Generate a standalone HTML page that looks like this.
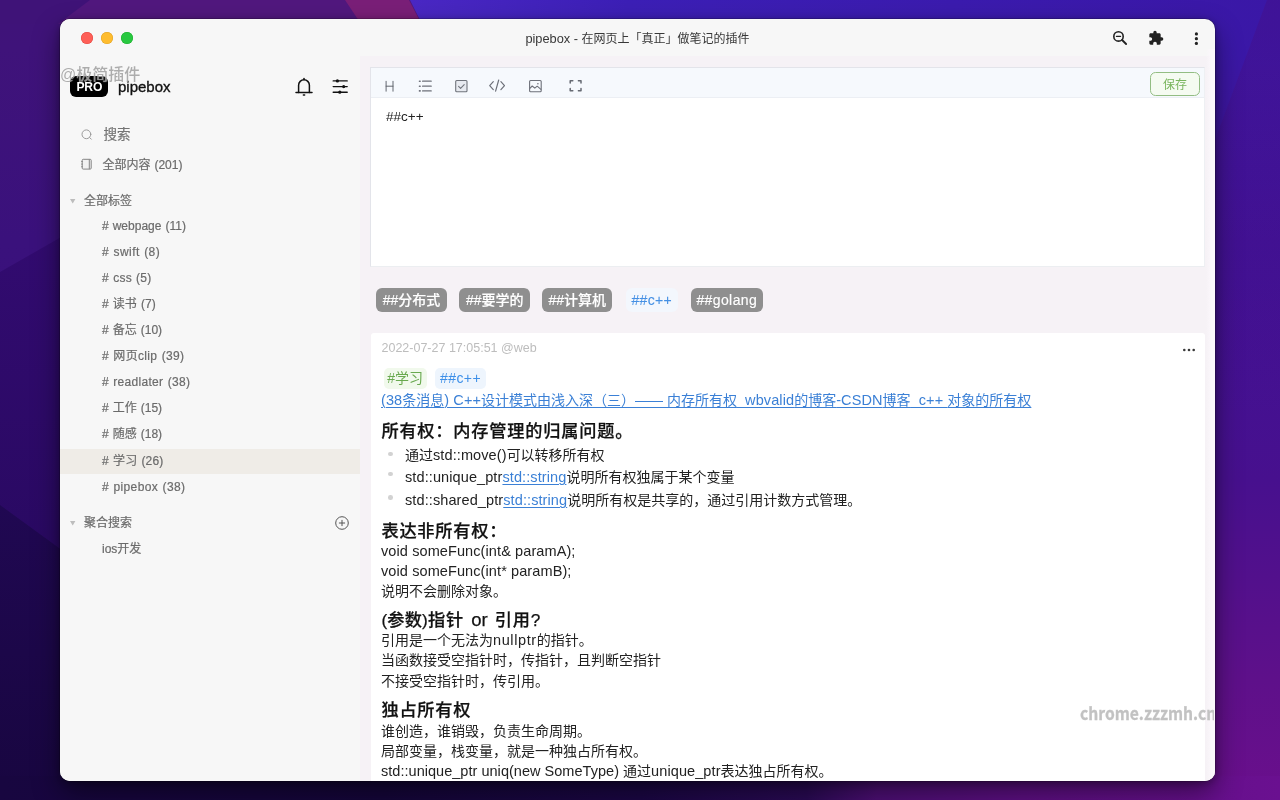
<!DOCTYPE html>
<html lang="zh-CN">
<head>
<meta charset="utf-8">
<title>pipebox - 在网页上「真正」做笔记的插件</title>
<style>
*{box-sizing:border-box;margin:0;padding:0}
html,body{width:1280px;height:800px;overflow:hidden}
body{position:relative;background:#3a128a;font-family:"Liberation Sans","Noto Sans CJK SC",sans-serif;-webkit-font-smoothing:antialiased}
#wall{position:absolute;left:0;top:0;width:1280px;height:800px}
.win{will-change:transform;position:absolute;left:60px;top:19px;width:1155px;height:762px;border-radius:10px;background:#f7f7f7;overflow:hidden;box-shadow:0 0 0 .5px rgba(0,0,0,.35),0 12px 28px rgba(0,0,0,.45),0 2px 8px rgba(0,0,0,.3)}
.abs{position:absolute}
/* title bar */
.tl{z-index:3;position:absolute;top:13px;width:12px;height:12px;border-radius:50%}
.title{z-index:3;position:absolute;left:0;right:0;top:9.6px;height:20px;line-height:20px;text-align:center;font-size:12px;color:#383838;letter-spacing:0}
/* sidebar */
.side{position:absolute;left:0;top:0;width:300px;bottom:0;background:#f7f7f7}
.main{position:absolute;left:300px;top:37px;right:0;bottom:0;background:#f6f2f6}
.pro{position:absolute;left:10px;top:57px;width:38px;height:21px;border-radius:6px;background:#000;color:#fff;font-weight:bold;font-size:13.5px;line-height:21px;text-align:center;letter-spacing:-.2px}
.brand{position:absolute;left:58px;top:58px;font-size:15px;line-height:20px;color:#111;-webkit-text-stroke:.35px #111}
.srow{position:absolute;left:0;width:300px;height:26px;line-height:26px;font-size:12px;color:#6b6b6b;white-space:nowrap;-webkit-text-stroke:.2px #6b6b6b}
.srow span{position:absolute;top:0;word-spacing:.7px}
/* main */
.editor{position:absolute;left:310px;top:48.4px;width:835px;height:199.6px;background:#fff;border:1px solid #e3e4ea;border-right-color:#eef0f3;border-bottom-color:#eceef1}
.tbar{position:absolute;left:0;top:0;right:0;height:30px;background:#f6f9fd;border-bottom:1px solid #eceff4}
.save{position:absolute;left:1090px;top:53px;width:50px;height:24px;border:1px solid #93bd83;border-radius:5.5px;background:#f5fbf1;color:#78b55c;font-size:12px;line-height:24.6px;text-align:center}
.etext{position:absolute;left:326px;top:89px;font-size:13.5px;line-height:18px;color:#222}
.tag{position:absolute;top:269.3px;height:23.4px;border-radius:6px;background:#8f8f8f;color:#fff;font-size:14px;line-height:24.4px;text-align:center;font-weight:500;white-space:nowrap;-webkit-text-stroke:.15px #fff}
.card{position:absolute;left:311px;top:314px;width:834px;height:460px;background:#fff;border-radius:3px 3px 0 0}
.date{position:absolute;left:10.5px;top:7px;font-size:12.5px;line-height:16px;color:#bdbdbd;white-space:nowrap}
.ln{position:absolute;left:10px;font-size:14px;line-height:20px;color:#222;white-space:nowrap}
.hd{position:absolute;left:10.4px;font-size:17.2px;letter-spacing:.8px;line-height:24px;color:#111;font-weight:500;white-space:nowrap;-webkit-text-stroke:.25px #111}
a{color:#3b80d6;text-decoration:underline;text-underline-offset:2px;text-decoration-thickness:1px}
.ctag{position:absolute;top:34.5px;height:21.5px;border-radius:5px;font-size:14px;line-height:21.5px;text-align:center;white-space:nowrap}
.dot{position:absolute;left:17.3px;width:4.6px;height:4.6px;border-radius:50%;background:#d2d2d2}
.l{font-size:14.5px;letter-spacing:.1px}
.wm1{position:absolute;left:0px;top:45.6px;z-index:5;font-size:16px;line-height:20px;color:rgba(138,138,138,.7);font-weight:500;white-space:nowrap;text-shadow:0 0 1px rgba(255,255,255,.75)}
.wm2{position:absolute;left:1020.4px;top:681.5px;width:134px;z-index:5;overflow:hidden;font-size:17.2px;line-height:24px;color:#c2c2c2;font-weight:700;white-space:nowrap;font-family:"Noto Sans CJK SC",sans-serif}
.wm2 span{display:inline-block;transform-origin:0 50%;transform:scaleX(.91);-webkit-text-stroke:.3px #c2c2c2}
</style>
</head>
<body>
<svg id="wall" viewBox="0 0 1280 800" preserveAspectRatio="none">
<defs>
<linearGradient id="gL" x1="0" y1="0" x2="0" y2="1"><stop offset="0" stop-color="#3f1378"/><stop offset=".06" stop-color="#3f137a"/><stop offset=".3" stop-color="#3a117c"/><stop offset="1" stop-color="#35107a"/></linearGradient>
<linearGradient id="gL2" x1="0" y1="0" x2="0" y2="1"><stop offset="0" stop-color="#320b70"/><stop offset="1" stop-color="#290962"/></linearGradient>
<linearGradient id="gL3" x1="0" y1="0" x2="0" y2="1"><stop offset="0" stop-color="#200852"/><stop offset="1" stop-color="#180640"/></linearGradient>
<linearGradient id="gD" x1="0" y1="0" x2="0" y2="1"><stop offset="0" stop-color="#4a0a78" stop-opacity=".32"/><stop offset="1" stop-color="#4a0a78" stop-opacity="0"/></linearGradient>
<linearGradient id="gR" x1="0" y1="0" x2="0" y2="1"><stop offset="0" stop-color="#3a19aa"/><stop offset=".3" stop-color="#401296"/><stop offset=".6" stop-color="#47108e"/><stop offset=".85" stop-color="#5e108a"/><stop offset="1" stop-color="#6a0f8c"/></linearGradient>
<linearGradient id="gT" x1="0" y1="0" x2="1" y2="0"><stop offset="0" stop-color="#4a28c4"/><stop offset=".25" stop-color="#3c1fb6"/><stop offset="1" stop-color="#3a17a6"/></linearGradient>
<linearGradient id="gB" x1="0" y1="0" x2="1" y2="0"><stop offset="0" stop-color="#180640"/><stop offset=".3" stop-color="#15063a"/><stop offset=".5" stop-color="#1b0745"/><stop offset=".63" stop-color="#2a0a55"/><stop offset=".685" stop-color="#4e0f76"/><stop offset=".8" stop-color="#5e0f84"/><stop offset="1" stop-color="#6a1090"/></linearGradient>
</defs>
<rect x="0" y="0" width="640" height="800" fill="url(#gL)"/>
<polygon points="0,272 70,232 640,232 640,560 0,560" fill="url(#gL2)"/>
<polygon points="0,505 70,556 640,556 640,800 0,800" fill="url(#gL3)"/>
<rect x="640" y="0" width="640" height="800" fill="url(#gR)"/>
<rect x="0" y="0" width="1280" height="24" fill="#51187e"/>
<polygon points="0,0 90,0 58,24 0,24" fill="#3f1378"/>
<polygon points="410,0 1280,0 1280,60 440,60" fill="url(#gT)"/>
<polygon points="345,0 409,0 440,60 385,60" fill="#7a1f78"/>
<polygon points="1267,0 1280,0 1280,420 1215,420 1215,140" fill="url(#gD)"/>
<rect x="0" y="776" width="1280" height="24" fill="url(#gB)"/>
</svg>

<div class="win">
  <!-- title bar -->
  <div class="tl" style="left:21px;background:#fe5f57;box-shadow:inset 0 0 0 .5px #e0443e"></div>
  <div class="tl" style="left:41px;background:#febc2e;box-shadow:inset 0 0 0 .5px #dea123"></div>
  <div class="tl" style="left:61px;background:#28c840;box-shadow:inset 0 0 0 .5px #1aab29"></div>
  <div class="title"><span style="font-size:12.8px">pipebox - </span>在网页上「真正」做笔记的插件</div>

  <div class="side">
    <div class="pro"><span style="display:inline-block;transform:scaleX(.9)">PRO</span></div>
    <div class="brand">pipebox</div>
    <!-- bell -->
    <svg class="abs" style="left:233.6px;top:57.5px" width="20" height="20" viewBox="0 0 20 20" fill="none" stroke="#111" stroke-width="1.5" stroke-linecap="round" stroke-linejoin="round">
      <path d="M4.6 15.4V8.2a5.4 5.4 0 0 1 10.8 0v7.2"/><path d="M2 15.4h16"/><path d="M9.4 18h1.2"/><path d="M10 1.6v1"/>
    </svg>
    <!-- sliders -->
    <svg class="abs" style="left:271px;top:58px" width="18" height="18" viewBox="0 0 18 18" fill="none" stroke="#111" stroke-width="1.4" stroke-linecap="round">
      <path d="M2.2 3.9h14M2.2 9.6h14M2.2 15.2h14"/>
      <circle cx="6.4" cy="3.9" r="1.6" fill="#111" stroke="none"/><circle cx="12.7" cy="9.6" r="1.6" fill="#111" stroke="none"/><circle cx="8.8" cy="15.2" r="1.6" fill="#111" stroke="none"/>
    </svg>
    <!-- search -->
    <svg class="abs" style="left:19.6px;top:108.7px" width="14" height="14" viewBox="0 0 14 14" fill="none" stroke="#9a9a9a" stroke-width="1" stroke-linecap="round"><circle cx="6.4" cy="6.3" r="4.4"/><path d="M9.7 9.6l1.6 1.6"/></svg>
    <div class="srow" style="top:103px;font-size:13.5px;color:#777"><span style="left:43.5px">搜索</span></div>
    <!-- notebook -->
    <svg class="abs" style="left:19.5px;top:137.8px" width="14" height="14" viewBox="0 0 14 14" fill="none" stroke="#858585" stroke-width="1"><rect x="2.2" y="2.3" width="9" height="9.8" rx="1" fill="#f1f1f1"/><path d="M9.3 2.3v9.8"/><path d="M1.2 4.5h1.6M1.2 7.1h1.6M1.2 9.7h1.6" stroke-width=".9"/></svg>
    <div class="srow" style="top:133px"><span style="left:42.4px">全部内容 (201)</span></div>

    <svg class="abs" style="left:10px;top:179.7px" width="6" height="5" viewBox="0 0 6 5"><path d="M0 0h5.4L2.7 4.4z" fill="#bdbdbd"/></svg>
    <div class="srow" style="top:169px"><span style="left:24px">全部标签</span></div>
    <div class="srow" style="top:194px"><span style="left:42px;letter-spacing:0px"># webpage (11)</span></div>
    <div class="srow" style="top:220px"><span style="left:42px;letter-spacing:.43px"># swift (8)</span></div>
    <div class="srow" style="top:246px"><span style="left:42px;letter-spacing:.23px"># css (5)</span></div>
    <div class="srow" style="top:272px"><span style="left:42px;letter-spacing:.05px"># 读书 (7)</span></div>
    <div class="srow" style="top:298px"><span style="left:42px"># 备忘 (10)</span></div>
    <div class="srow" style="top:324px"><span style="left:42px;letter-spacing:.33px"># 网页clip (39)</span></div>
    <div class="srow" style="top:350px"><span style="left:42px;letter-spacing:.3px"># readlater (38)</span></div>
    <div class="srow" style="top:376px"><span style="left:42px"># 工作 (15)</span></div>
    <div class="srow" style="top:402px"><span style="left:42px"># 随感 (18)</span></div>
    <div class="abs" style="left:0;top:429.6px;width:300px;height:25px;background:#efece7"></div>
    <div class="srow" style="top:428.5px"><span style="left:42px;letter-spacing:.14px"># 学习 (26)</span></div>
    <div class="srow" style="top:455px"><span style="left:42px;letter-spacing:.38px"># pipebox (38)</span></div>

    <svg class="abs" style="left:10px;top:501.7px" width="6" height="5" viewBox="0 0 6 5"><path d="M0 0h5.4L2.7 4.4z" fill="#bdbdbd"/></svg>
    <div class="srow" style="top:491px"><span style="left:24px">聚合搜索</span></div>
    <svg class="abs" style="left:274px;top:495.7px" width="16" height="16" viewBox="0 0 16 16" fill="none" stroke="#555" stroke-width="1"><circle cx="8" cy="8" r="6.3"/><path d="M8 5.3v5.4M5.3 8h5.4" stroke-linecap="round"/></svg>
    <div class="srow" style="top:517px"><span style="left:42px">ios开发</span></div>
  </div>
  <div class="main"></div>
  <div class="abs" style="left:1146px;top:30px;width:9px;bottom:0;background:linear-gradient(to right,rgba(252,248,252,0),#fbf7fb 60%)"></div>
  <!-- title-bar right icons -->
  <svg class="abs" style="left:1050px;top:9px;z-index:3" width="20" height="20" viewBox="0 0 20 20" fill="none" stroke="#222" stroke-width="1.6" stroke-linecap="round"><circle cx="8.5" cy="8.4" r="4.7"/><path d="M12.1 12l4 4" stroke-width="1.8"/><path d="M6.5 8.4h4" stroke-width="1.4"/></svg>
  <svg class="abs" style="left:1088px;top:11px;z-index:3" width="16" height="16" viewBox="0 0 24 24"><path fill="#222" d="M20.5 11H19V7c0-1.1-.9-2-2-2h-4V3.5a2.5 2.5 0 0 0-5 0V5H4c-1.1 0-1.99.9-1.99 2v3.8H3.5c1.49 0 2.7 1.21 2.7 2.7s-1.21 2.7-2.7 2.7H2V20c0 1.1.9 2 2 2h3.8v-1.5c0-1.49 1.21-2.7 2.7-2.7s2.7 1.21 2.7 2.7V22H17c1.1 0 2-.9 2-2v-4h1.5a2.5 2.5 0 0 0 0-5z"/></svg>
  <svg class="abs" style="left:1132px;top:11px;z-index:3" width="8" height="16" viewBox="0 0 8 16" fill="#222"><circle cx="4.4" cy="3.9" r="1.6"/><circle cx="4.4" cy="8.7" r="1.6"/><circle cx="4.4" cy="13.4" r="1.6"/></svg>

  <!-- editor -->
  <div class="editor"><div class="tbar"></div></div>
  <!-- toolbar icons (window coords) -->
  <svg class="abs" style="left:322.6px;top:59px" width="14" height="16" viewBox="0 0 14 16" fill="none" stroke="#5c6068" stroke-width=".95" stroke-linecap="round"><path d="M3.1 3.3v9.9M10 3.3v9.9M3.1 8.2H10"/></svg>
  <svg class="abs" style="left:358px;top:59px" width="16" height="16" viewBox="0 0 16 16" fill="none" stroke="#6d7079" stroke-width="1.3" stroke-linecap="round"><path d="M4.6 3.2h8.6M4.6 8.2h8.6M4.6 12.9h8.6"/><path d="M1.5 3.2h.6M1.5 8.2h.6M1.5 12.9h.6" stroke-width="1.6"/></svg>
  <svg class="abs" style="left:394px;top:60px" width="16" height="16" viewBox="0 0 16 16" fill="none" stroke="#70747c" stroke-width="1.1" stroke-linecap="round" stroke-linejoin="round"><rect x="1.7" y="1.5" width="11.3" height="11.3" rx="1" fill="#e7eaf0"/><path d="M4.6 7.4l2 1.9 3.6-3.6"/></svg>
  <svg class="abs" style="left:428px;top:59px" width="20" height="16" viewBox="0 0 20 16" fill="none" stroke="#6d7079" stroke-width="1.2" stroke-linecap="round" stroke-linejoin="round"><path d="M5.3 3.6L1.7 7.6l3.6 4M12.9 3.6l3.6 4-3.6 4M10.7 2L7.6 13.2"/></svg>
  <svg class="abs" style="left:468px;top:60px" width="16" height="16" viewBox="0 0 16 16" fill="none" stroke="#6d7079" stroke-width="1.1" stroke-linejoin="round"><rect x="1.6" y="1.5" width="11.6" height="11.3" rx="1"/><path d="M1.6 9.6l2.6-2.6 2.6 2.2 2.4-2 4 3.4"/><circle cx="9.9" cy="4.7" r=".8" fill="#6d7079" stroke="none"/></svg>
  <svg class="abs" style="left:508px;top:59px" width="16" height="16" viewBox="0 0 16 16" fill="none" stroke="#666a73" stroke-width="1.5" stroke-linecap="round" stroke-linejoin="round"><path d="M2.2 5V2.7h2.6M10.4 2.7H13V5M13 10.4v2.4h-2.6M4.8 12.8H2.2v-2.4"/></svg>
  <div class="save">保存</div>
  <div class="etext">##c++</div>

  <!-- tag filter row -->
  <div class="tag" style="left:316px;width:71px">##分布式</div>
  <div class="tag" style="left:399.3px;width:71px">##要学的</div>
  <div class="tag" style="left:482.2px;width:70.3px">##计算机</div>
  <div class="tag" style="left:565.5px;width:52.5px;background:#f3f7fd;color:#4590e4;letter-spacing:.3px;font-weight:400;-webkit-text-stroke:.1px #4590e4">##c++</div>
  <div class="tag" style="left:631px;width:71.6px;letter-spacing:.4px">##golang</div>

  <!-- note card -->
  <div class="card">
    <div class="date">2022-07-27 17:05:51 @web</div>
    <svg class="abs" style="left:811.3px;top:14px" width="14" height="6" viewBox="0 0 14 6" fill="#3a3a3a"><circle cx="2.3" cy="3" r="1.3"/><circle cx="7" cy="3" r="1.3"/><circle cx="11.7" cy="3" r="1.3"/></svg>
    <div class="ctag" style="left:12.6px;width:43px;background:#f1f9ec;color:#69a94f">#学习</div>
    <div class="ctag" style="left:64px;width:51px;background:#eef5fd;color:#3d8fe8;letter-spacing:.4px">##c++</div>
    <div class="ln" style="top:57px"><a><span class="l">(38</span>条消息<span class="l">) C++</span>设计模式由浅入深（三）—— 内存所有权<span class="l">_wbvalid</span>的博客<span class="l">-CSDN</span>博客<span class="l">_c++ </span>对象的所有权</a></div>
    <div class="hd" style="top:86px">所有权：内存管理的归属问题。</div>
    <div class="dot" style="top:118.5px"></div><div class="ln" style="top:112px;left:34px">通过<span class="l">std::move()</span>可以转移所有权</div>
    <div class="dot" style="top:138.8px"></div><div class="ln" style="top:134px;left:34px"><span class="l">std::unique_ptr</span><a><span class="l">std::string</span></a>说明所有权独属于某个变量</div>
    <div class="dot" style="top:162px"></div><div class="ln" style="top:157px;left:34px"><span class="l">std::shared_ptr</span><a><span class="l">std::string</span></a>说明所有权是共享的，通过引用计数方式管理。</div>
    <div class="hd" style="top:185.5px">表达非所有权：</div>
    <div class="ln" style="top:208px"><span class="l">void someFunc(int&amp; paramA);</span></div>
    <div class="ln" style="top:228px"><span class="l">void someFunc(int* paramB);</span></div>
    <div class="ln" style="top:248px">说明不会删除对象。</div>
    <div class="hd" style="top:275px"><span style="letter-spacing:.2px">(参数)</span>指针<span style="font-size:18.5px;word-spacing:2px;letter-spacing:0"> or </span>引用?</div>
    <div class="ln" style="top:297px">引用是一个无法为<span class="l" style="letter-spacing:.6px">nullptr</span>的指针。</div>
    <div class="ln" style="top:317px">当函数接受空指针时，传指针，且判断空指针</div>
    <div class="ln" style="top:338px">不接受空指针时，传引用。</div>
    <div class="hd" style="top:365px">独占所有权</div>
    <div class="ln" style="top:388px">谁创造，谁销毁，负责生命周期。</div>
    <div class="ln" style="top:408px">局部变量，栈变量，就是一种独占所有权。</div>
    <div class="ln" style="top:428px"><span class="l" style="letter-spacing:.03px">std::unique_ptr uniq(new SomeType) </span>通过<span class="l">unique_ptr</span>表达独占所有权。</div>
  </div>
  <div class="wm1">@极简插件</div>
  <div class="wm2"><span>chrome.zzzmh.cn</span></div>

</div>
</body>
</html>
